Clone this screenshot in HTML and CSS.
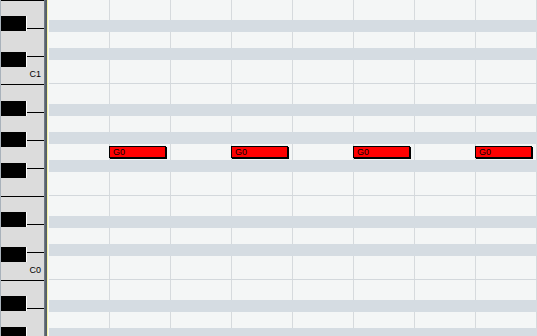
FILE: index.html
```html
<!DOCTYPE html>
<html>
<head>
<meta charset="utf-8">
<link rel="stylesheet" href="styles.css">
</head>
<body>
<div class="roll">
  <div class="keyboard">
    <div class="wk"></div>
    <div class="wk"></div>
    <div class="wk"><span class="lbl">C1</span></div>
    <div class="wk"></div>
    <div class="wk"></div>
    <div class="wk"></div>
    <div class="wk"></div>
    <div class="wk"></div>
    <div class="wk"></div>
    <div class="wk"><span class="lbl">C0</span></div>
    <div class="wk"></div>
    <div class="wk"></div>
    <div class="bk" style="top:16px"></div>
    <div class="bk" style="top:52px"></div>
    <div class="bk" style="top:101px"></div>
    <div class="bk" style="top:132px"></div>
    <div class="bk" style="top:163px"></div>
    <div class="bk" style="top:212px"></div>
    <div class="bk" style="top:247px"></div>
    <div class="bk" style="top:296px"></div>
    <div class="bk" style="top:327px"></div>
  </div>
  <div class="kb-edge"></div>
  <div class="grid">
    <div class="row w20"></div>
    <div class="row blk"></div>
    <div class="row w16"></div>
    <div class="row blk"></div>
    <div class="row w24 sep"></div>
    <div class="row w20"></div>
    <div class="row blk"></div>
    <div class="row w16"></div>
    <div class="row blk"></div>
    <div class="row w16 notes">
      <div class="note" style="left:60px">G0</div>
      <div class="note" style="left:182px">G0</div>
      <div class="note" style="left:304px">G0</div>
      <div class="note" style="left:426px">G0</div>
    </div>
    <div class="row blk"></div>
    <div class="row w24 sep"></div>
    <div class="row w20"></div>
    <div class="row blk"></div>
    <div class="row w16"></div>
    <div class="row blk"></div>
    <div class="row w24 sep"></div>
    <div class="row w20"></div>
    <div class="row blk"></div>
    <div class="row w16"></div>
    <div class="row blk"></div>
  </div>
</div>
</body>
</html>
```
FILE: styles.css
```css
html, body {
  margin: 0;
  padding: 0;
  overflow: hidden;
  background: #f4f6f6;
}
.roll {
  display: flex;
  width: 537px;
  height: 336px;
  overflow: hidden;
  font-family: "Liberation Sans", Arial, sans-serif;
}
.keyboard {
  position: relative;
  flex: 0 0 43px;
  width: 43px;
  border-left: 1px solid #a9b2bb;
  background: #dcdcdc;
  display: flex;
  flex-direction: column;
}
.wk {
  flex: 0 0 28px;
  height: 28px;
  box-sizing: border-box;
  border-top: 1px solid #000;
  display: flex;
  align-items: flex-end;
  justify-content: flex-end;
  padding: 0 3px 5px 0;
}
.lbl {
  font-size: 9px;
  line-height: 9px;
  color: #000;
}
.bk {
  position: absolute;
  left: 0;
  width: 25px;
  height: 15px;
  background: #000;
  border-right: 1px solid #fff;
}
.kb-edge {
  flex: 0 0 3px;
  background: linear-gradient(to right, #7a838d, #4d5761 70%, #5a646e);
  border-right: 1px solid #f5f3a6;
  box-sizing: content-box;
}
.grid {
  flex: 1;
  border-left: 1px solid #f7f8f8;
  display: flex;
  flex-direction: column;
  background-color: #f4f6f6;
  background-image: linear-gradient(to right, transparent 60px, #d6dadd 60px);
  background-size: 61px 100%;
  background-repeat: repeat-x;
}
.row {
  flex: 0 0 auto;
  box-sizing: border-box;
}
.w16 { height: 16px; }
.w20 { height: 20px; }
.w24 { height: 24px; }
.sep { border-bottom: 1px solid #d3d8dc; }
.blk {
  height: 12px;
  background: #d5dce2;
}
.notes {
  position: relative;
}
.note {
  position: absolute;
  top: 2px;
  width: 57px;
  height: 12px;
  box-sizing: border-box;
  background: #ff0000;
  border: 1px solid #000;
  box-shadow: 1px 1px 0 #000;
  padding-left: 3px;
  font-size: 9px;
  line-height: 10px;
  color: #000;
}
```
